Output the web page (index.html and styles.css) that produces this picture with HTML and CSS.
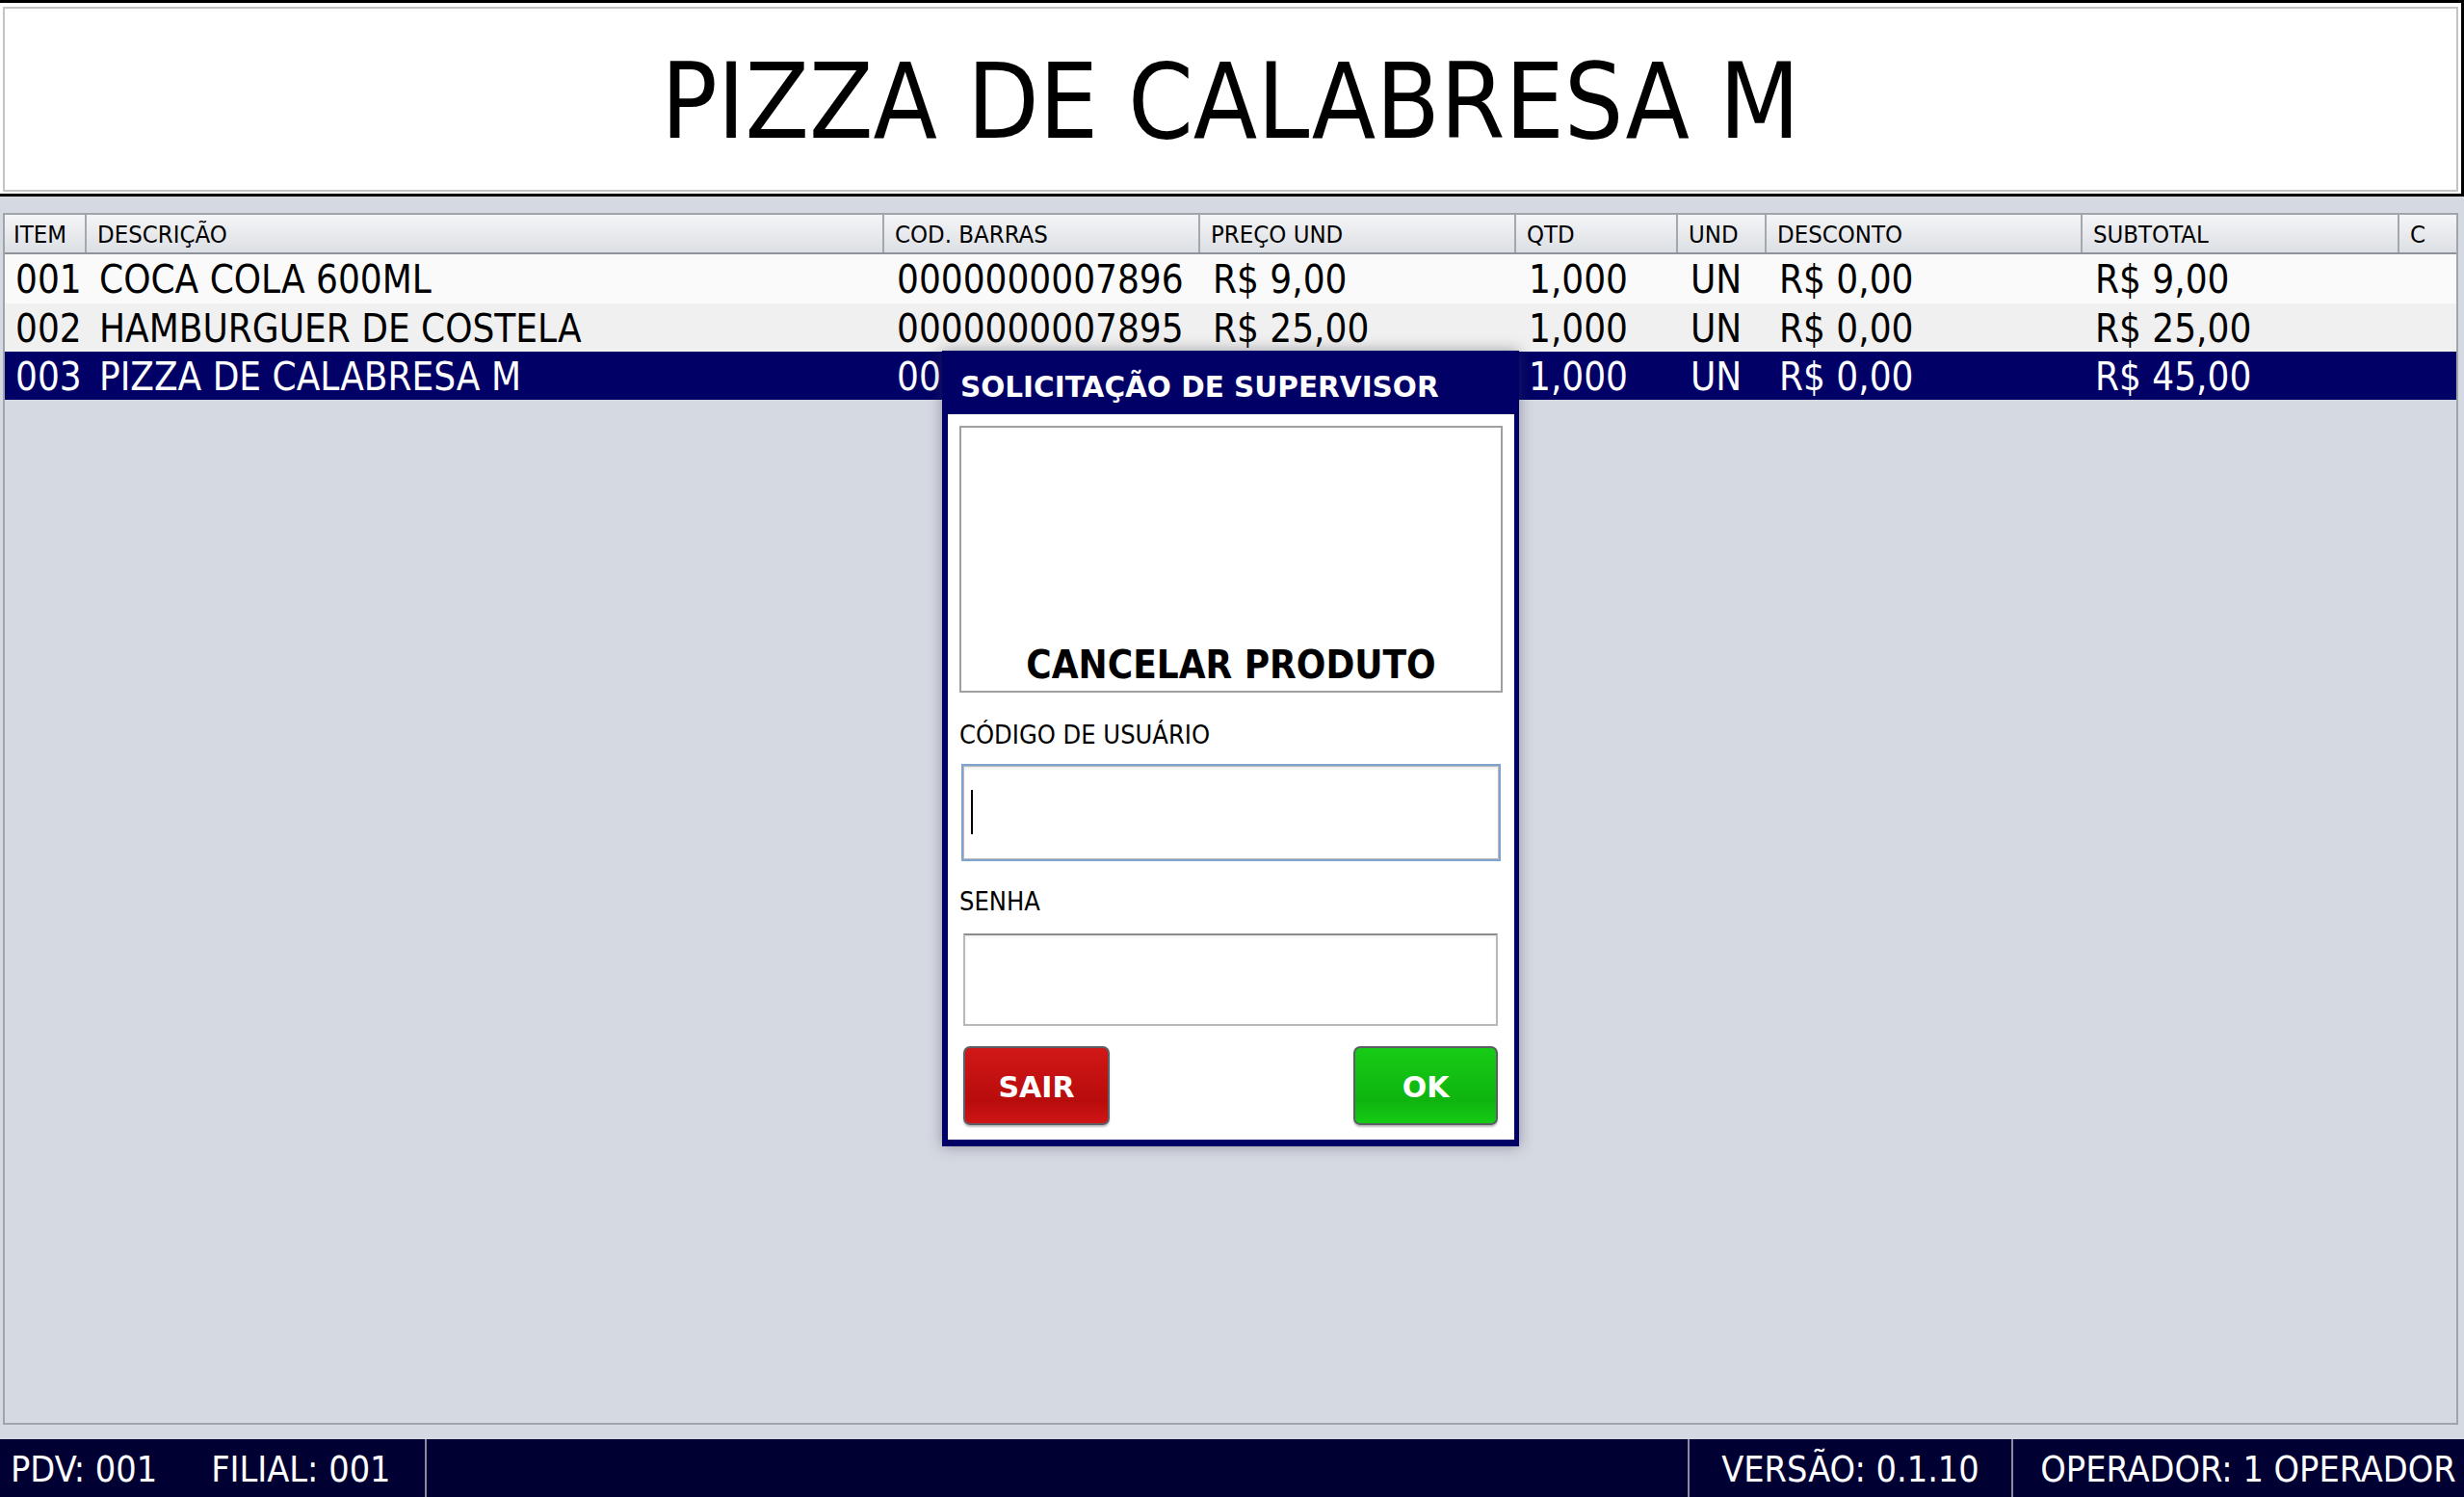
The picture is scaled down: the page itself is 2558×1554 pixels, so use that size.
FILE: index.html
```html
<!DOCTYPE html>
<html lang="pt-BR">
<head>
<meta charset="utf-8">
<title>PDV</title>
<link rel="stylesheet" href="styles.css">
</head>
<body>
<div class="screen">
  <div class="title-frame">
    <div class="title-panel">PIZZA DE CALABRESA M</div>
  </div>

  <div class="grid-box">
    <div class="row head">
      <div class="cell">ITEM</div>
      <div class="cell">DESCRIÇÃO</div>
      <div class="cell">COD. BARRAS</div>
      <div class="cell">PREÇO UND</div>
      <div class="cell">QTD</div>
      <div class="cell">UND</div>
      <div class="cell">DESCONTO</div>
      <div class="cell">SUBTOTAL</div>
      <div class="cell">C</div>
    </div>
    <div class="row item odd">
      <div class="cell">001</div>
      <div class="cell">COCA COLA 600ML</div>
      <div class="cell">0000000007896</div>
      <div class="cell">R$ 9,00</div>
      <div class="cell">1,000</div>
      <div class="cell">UN</div>
      <div class="cell">R$ 0,00</div>
      <div class="cell">R$ 9,00</div>
      <div class="cell"></div>
    </div>
    <div class="row item even">
      <div class="cell">002</div>
      <div class="cell">HAMBURGUER DE COSTELA</div>
      <div class="cell">0000000007895</div>
      <div class="cell">R$ 25,00</div>
      <div class="cell">1,000</div>
      <div class="cell">UN</div>
      <div class="cell">R$ 0,00</div>
      <div class="cell">R$ 25,00</div>
      <div class="cell"></div>
    </div>
    <div class="row item selected">
      <div class="cell">003</div>
      <div class="cell">PIZZA DE CALABRESA M</div>
      <div class="cell">0000000007894</div>
      <div class="cell">R$ 45,00</div>
      <div class="cell">1,000</div>
      <div class="cell">UN</div>
      <div class="cell">R$ 0,00</div>
      <div class="cell">R$ 45,00</div>
      <div class="cell"></div>
    </div>
  </div>

  <div class="status">
    <div class="st st-left"><span>PDV: 001</span><span class="filial">FILIAL: 001</span></div>
    <div class="st st-fill"></div>
    <div class="st st-ver">VERSÃO: 0.1.10</div>
    <div class="st st-op">OPERADOR: 1 OPERADOR</div>
  </div>

  <div class="dialog">
    <div class="dlg-title">SOLICITAÇÃO DE SUPERVISOR</div>
    <div class="dlg-body">
      <div class="msg-box">CANCELAR PRODUTO</div>
      <div class="lbl lbl-user">CÓDIGO DE USUÁRIO</div>
      <div class="field field-focus"><span class="caret"></span></div>
      <div class="lbl lbl-pass">SENHA</div>
      <div class="field field-pass"></div>
      <div class="buttons">
        <div class="btn btn-exit">SAIR</div>
        <div class="btn btn-ok">OK</div>
      </div>
    </div>
  </div>
</div>
</body>
</html>
```

FILE: styles.css
```css
* { box-sizing: border-box; }
html, body { margin: 0; padding: 0; }
body {
  width: 2558px;
  height: 1554px;
  overflow: hidden;
  background: #d5d9e1;
  font-family: "DejaVu Sans Condensed", "DejaVu Sans", sans-serif;
  color: #000;
}
.screen {
  position: relative;
  width: 2558px;
  height: 1554px;
  display: flex;
  flex-direction: column;
}

/* title */
.title-frame {
  height: 204px;
  background: #fff;
  border-top: 3px solid #000;
  border-bottom: 3px solid #000;
  border-right: 3px solid #000;
  padding: 4px 3px 2px 3px;
}
.title-panel {
  height: 100%;
  border: 2px solid #c4c4c4;
  background: #fff;
  display: flex;
  align-items: center;
  justify-content: center;
  font-size: 108px;
  line-height: 1;
  padding-top: 6px;
}

/* grid */
.grid-box {
  flex: 1;
  margin: 17px 6px 15px 3px;
  border: 2px solid #a0a4ab;
  background: #d5d9e1;
}
.row {
  display: grid;
  grid-template-columns: 85px 828px 328px 328px 168px 92px 328px 329px 1fr;
}
.head {
  height: 41px;
  background: linear-gradient(#f4f5f7, #dcdfe4);
  border-bottom: 2px solid #8e939b;
  font-size: 25.5px;
}
.head .cell {
  border-right: 2px solid #a3a7ae;
  padding-left: 9px;
  line-height: 41px;
  white-space: nowrap;
  overflow: hidden;
}
.head .cell:nth-child(n+2) { padding-left: 11px; }
.head .cell:last-child { border-right: none; }
.item {
  height: 50px;
  font-size: 40px;
}
.item .cell {
  padding-left: 11px;
  line-height: 53px;
  white-space: nowrap;
  overflow: hidden;
}
.item .cell:nth-child(n+2) { padding-left: 13px; }
.odd { background: #fafafa; height: 51px; }
.even { background: #f0f0f0; }
.selected { background: #000066; color: #fff; }

/* status bar */
.status {
  height: 60px;
  background: #000033;
  color: #fff;
  display: flex;
  font-size: 37.5px;
}
.st {
  line-height: 63px;
  white-space: nowrap;
}
.st-left {
  width: 443px;
  border-right: 2px solid #8a8aa0;
  padding-left: 11px;
}
.filial { margin-left: 56px; }
.st-fill {
  width: 1311px;
  border-right: 2px solid #8a8aa0;
}
.st-ver {
  width: 336px;
  border-right: 2px solid #8a8aa0;
  text-align: center;
}
.st-op {
  flex: 1;
  text-align: center;
  padding-left: 20px;
}

/* dialog */
.dialog {
  position: absolute;
  left: 978px;
  top: 364px;
  width: 599px;
  height: 826px;
  background: #000066;
  padding: 0 5px 7px 6px;
  display: flex;
  flex-direction: column;
  box-shadow: 0 0 14px rgba(60, 60, 80, 0.45);
}
.dlg-title {
  height: 66px;
  flex: none;
  color: #fff;
  font-family: "DejaVu Sans", sans-serif;
  font-weight: bold;
  font-size: 29.5px;
  line-height: 76px;
  padding-left: 13px;
  white-space: nowrap;
}
.dlg-body {
  flex: 1;
  background: #fff;
  padding: 12px 12px 0 12px;
  display: flex;
  flex-direction: column;
}
.msg-box {
  height: 277px;
  border: 2px solid #a0a0a0;
  display: flex;
  align-items: flex-end;
  justify-content: center;
  font-family: "DejaVu Sans Condensed", "DejaVu Sans", sans-serif;
  font-weight: bold;
  font-size: 40px;
  line-height: 1;
  padding-bottom: 7px;
}
.lbl {
  font-size: 27px;
  line-height: 32px;
  white-space: nowrap;
}
.lbl-user { margin-top: 28px; }
.lbl-pass { margin-top: 26px; }
.field {
  background: #fff;
  position: relative;
}
.field-focus {
  margin: 14px 2px 0 2px;
  height: 101px;
  border: 2px solid #7fa3cf;
  box-shadow: inset 0 0 0 1px #b8b8b8, inset 0 3px 3px rgba(0,0,0,0.08);
}
.caret {
  position: absolute;
  left: 8px;
  top: 25px;
  width: 2px;
  height: 46px;
  background: #000;
}
.field-pass {
  margin: 17px 5px 0 4px;
  height: 96px;
  border: 2px solid #b9b9b9;
  border-top-color: #8c8c8c;
  box-shadow: inset 0 2px 3px rgba(0,0,0,0.06);
}
.buttons {
  margin: 21px 5px 0 4px;
  display: flex;
  justify-content: space-between;
}
.btn {
  height: 82px;
  border: 2px solid #5d5d66;
  border-radius: 7px;
  color: #fff;
  font-family: "DejaVu Sans", sans-serif;
  font-weight: bold;
  font-size: 30px;
  display: flex;
  align-items: center;
  justify-content: center;
  padding-top: 2px;
  box-shadow: 0 2px 2px rgba(0,0,0,0.25);
}
.btn-exit {
  width: 152px;
  background: linear-gradient(#d21717, #b80c0c 70%, #d01515);
}
.btn-ok {
  width: 150px;
  background: linear-gradient(#16cc16, #0fb40f 70%, #15cb15);
}
```
